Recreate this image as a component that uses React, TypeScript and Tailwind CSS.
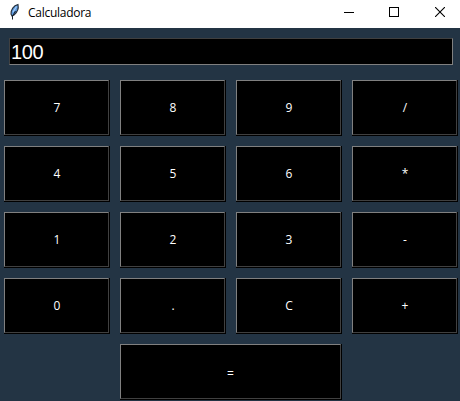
const rows: string[][] = [
  ['7', '8', '9', '/'],
  ['4', '5', '6', '*'],
  ['1', '2', '3', '-'],
  ['0', '.', 'C', '+'],
];

function Key({ label, wide = false }: { label: string; wide?: boolean }) {
  return (
    <button
      className={`flex h-14 border-r border-b border-black bg-black text-xs text-white ${
        wide ? 'col-span-2 col-start-2 w-[222px]' : 'w-[106px]'
      }`}
    >
      <span
        className={`flex h-full w-full items-center justify-center border border-t-[#808080] border-r-[#404040] border-b-[#404040] border-l-[#808080] ${
          wide ? 'pt-[4px]' : 'pt-px pl-px'
        }`}
      >
        {label}
      </span>
    </button>
  );
}

function Feather() {
  return (
    <svg className="mt-[3px] ml-[9px] h-[17px] w-[11px]" viewBox="0 0 11 17" fill="none">
      <path d="M2 11C1.8 7 4.5 2.5 9 1.5C9.8 5 8.5 9 5 12L3 13Z" fill="#5d9be0" stroke="#26303c" strokeWidth="1.1" />
      <path d="M4 9L7.5 3.5" stroke="#a9d0fa" strokeWidth="1.2" />
      <path d="M3.5 16.5V13L6.5 8" stroke="#17212c" strokeWidth="1" />
    </svg>
  );
}

function WindowControls() {
  return (
    <div className="ml-auto flex h-full gap-[35px] pt-[7px] pr-[15px]">
      <svg width="10" height="10" shapeRendering="crispEdges">
        <path d="M0 5.5H10" stroke="black" />
      </svg>
      <svg width="10" height="10" shapeRendering="crispEdges">
        <path d="M.5 .5H9.5V9.5H.5Z" fill="none" stroke="black" />
      </svg>
      <svg className="ml-px" width="10" height="10">
        <path d="M0 0L10 10M10 0L0 10" stroke="black" strokeWidth="1.1" />
      </svg>
    </div>
  );
}

export default function App() {
  return (
    <div className="h-[401px] w-[460px] overflow-hidden bg-[#233444] font-['Open_Sans','Noto_Sans',sans-serif]">
      <header className="flex h-7 bg-white text-black">
        <Feather />
        <span className="ml-2 pt-[3px] text-xs leading-5 tracking-[-0.27px]">Calculadora</span>
        <WindowControls />
      </header>
      <div className="px-[9px] pt-[10px]">
        <div className="flex h-[27px] w-[444px] items-center border border-t-[#404040] border-r-[#808080] border-b-[#808080] border-l-[#404040] bg-black pl-px font-['Liberation_Sans',sans-serif] text-xl leading-5 tracking-[-0.4px] text-white">
          100
        </div>
      </div>
      <main className="grid grid-cols-[repeat(4,106px)] gap-[10px] pt-[15px] pl-1">
        {rows.flat().map((label) => (
          <Key key={label} label={label} />
        ))}
        <Key label="=" wide />
      </main>
    </div>
  );
}
